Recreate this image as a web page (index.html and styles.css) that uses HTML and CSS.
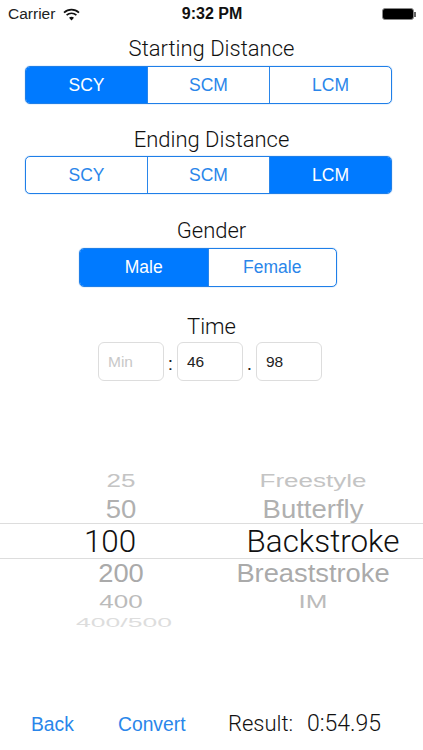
FILE: index.html
```html
<!DOCTYPE html>
<html lang="en">
<head>
    <meta charset="UTF-8">
    <meta name="viewport" content="width=device-width, initial-scale=1.0">
    <title>Swim Time Converter</title>
    <link rel="stylesheet" href="styles.css">
</head>
<body>
    <div class="status-bar">
        <div class="status-left">
            <span>Carrier</span>
            <svg class="wifi" width="17" height="13" viewBox="0 0 17 13">
                <path d="M1 4.6C5.3 0.6 11.7 0.6 16 4.6" fill="none" stroke="#111" stroke-width="1.7"/>
                <path d="M3.6 7.2C6.4 4.6 10.6 4.6 13.4 7.2" fill="none" stroke="#111" stroke-width="1.7"/>
                <path d="M6 9.7C7.4 8.4 9.6 8.4 11 9.7L8.5 12.4Z" fill="#111"/>
            </svg>
        </div>
        <div class="status-time">9:32 PM</div>
        <div class="battery"><div class="battery-body"></div><div class="battery-tip"></div></div>
    </div>

    <h2 class="title">Starting Distance</h2>
    <div class="segments wide tight">
        <div class="seg active">SCY</div>
        <div class="seg">SCM</div>
        <div class="seg">LCM</div>
    </div>

    <h2 class="title">Ending Distance</h2>
    <div class="segments wide">
        <div class="seg">SCY</div>
        <div class="seg">SCM</div>
        <div class="seg active">LCM</div>
    </div>

    <h2 class="title">Gender</h2>
    <div class="segments narrow">
        <div class="seg active">Male</div>
        <div class="seg">Female</div>
    </div>

    <h2 class="title">Time</h2>
    <div class="time-row">
        <div class="field placeholder">Min</div>
        <span class="sep">:</span>
        <div class="field">46</div>
        <span class="sep">.</span>
        <div class="field">98</div>
    </div>

    <div class="picker">
        <div class="row r-25"><span class="num">25</span><span class="name">Freestyle</span></div>
        <div class="row r-50"><span class="num">50</span><span class="name">Butterfly</span></div>
        <div class="row selected"><span class="num">100</span><span class="name">Backstroke</span></div>
        <div class="row r-200"><span class="num">200</span><span class="name">Breaststroke</span></div>
        <div class="row r-400"><span class="num">400</span><span class="name">IM</span></div>
        <div class="row r-last"><span class="num">400/500</span><span class="name"></span></div>
    </div>

    <div class="bottom-bar">
        <span class="link back">Back</span>
        <span class="link convert">Convert</span>
        <span class="result">Result:</span>
        <span class="result-value">0:54.95</span>
    </div>
</body>
</html>
```

FILE: styles.css
```css
body {
    font-family: "Liberation Sans", Arial, sans-serif;
    width: 423px;
    height: 750px;
    margin: 0;
    background: #fff;
    color: #222;
    overflow: hidden;
}

.status-bar {
    display: flex;
    align-items: center;
    justify-content: space-between;
    height: 28px;
    padding: 0 7px 0 8px;
    font-size: 15.5px;
    color: #222;
}
.status-left {
    display: flex;
    align-items: center;
    gap: 8px;
    width: 120px;
}
.status-time {
    font-weight: bold;
    font-size: 16px;
    color: #111;
}
.battery {
    display: flex;
    align-items: center;
    justify-content: flex-end;
    width: 120px;
}
.battery-body {
    width: 30px;
    height: 10px;
    background: #000;
    border: 1px solid #888;
    border-radius: 3px;
}
.battery-tip {
    width: 2px;
    height: 5px;
    background: #666;
}

.title {
    margin: 0;
    height: 38px;
    padding-top: 8px;
    box-sizing: border-box;
    text-align: center;
    font-family: Roboto, "Liberation Sans", sans-serif;
    font-size: 22px;
    font-weight: 300;
    line-height: 26px;
    color: #111;
}
.tight + .title {
    padding-top: 9px;
}

.segments {
    display: flex;
    height: 38px;
    box-sizing: border-box;
    border: 1px solid #1f7fe8;
    border-radius: 5px;
    box-shadow: 0 0 1px #2a86ea;
    overflow: hidden;
    margin-bottom: 16px;
}
.tight {
    margin-bottom: 14px;
}
.wide {
    width: 367px;
    margin-left: 25px;
}
.narrow {
    width: 258px;
    height: 39px;
    margin-left: 79px;
    margin-bottom: 19px;
}
.seg {
    flex: 1;
    display: flex;
    align-items: center;
    justify-content: center;
    font-size: 17.5px;
    color: #2a86ea;
    border-left: 1px solid #2a86ea;
}
.seg:first-child {
    border-left: none;
}
.seg.active {
    background: #007aff;
    color: #fff;
}

.time-row {
    display: flex;
    align-items: center;
    margin-left: 98px;
    margin-top: -2px;
}
.field {
    width: 66px;
    height: 39px;
    box-sizing: border-box;
    border: 1px solid #ddd;
    border-radius: 6px;
    padding-left: 9px;
    font-size: 15.5px;
    line-height: 37px;
    color: #222;
}
.placeholder {
    color: #c8c8c8;
}
.sep {
    width: 13px;
    text-align: center;
    font-size: 19px;
    padding-top: 5px;
}

.picker {
    margin-top: 83px;
}
.row {
    display: grid;
    grid-template-columns: 226px 174px;
    text-align: center;
    white-space: nowrap;
}
.num {
    padding-left: 16px;
}
.r-25 {
    height: 28px;
    line-height: 36px;
    font-size: 26px;
    color: #c4c4c4;
    transform: scaleY(0.7);
}
.r-50 {
    height: 31px;
    line-height: 35px;
    font-size: 27.5px;
    color: #b0b0b0;
    transform: scaleY(0.92);
}
.selected {
    height: 36px;
    box-sizing: border-box;
    font-family: Roboto, "Liberation Sans", sans-serif;
    font-weight: 300;
    line-height: 36px;
    font-size: 31.4px;
    color: #111;
    border-top: 1px solid #ddd;
    border-bottom: 1px solid #ddd;
}
.selected .num {
    padding-left: 0;
    padding-right: 6px;
}
.selected .name {
    padding-left: 20px;
}
.r-200 {
    height: 29px;
    line-height: 29px;
    font-size: 27.3px;
    color: #aaa;
    transform: scaleY(0.94);
}
.r-400 {
    height: 26px;
    line-height: 28px;
    font-size: 26px;
    color: #bbb;
    transform: scaleY(0.72);
}
.r-last {
    height: 16px;
    line-height: 18px;
    font-size: 26.5px;
    color: #ddd;
    transform: scaleY(0.5);
}
.r-last .num {
    padding-left: 22px;
}

.bottom-bar {
    display: flex;
    align-items: baseline;
    margin-top: 81px;
    padding-left: 31px;
    font-size: 19.3px;
    line-height: 26px;
}
.link {
    color: #2a86ea;
}
.back {
    width: 87px;
}
.convert {
    width: 110px;
}
.result {
    width: 79px;
    font-family: Roboto, "Liberation Sans", sans-serif;
    font-weight: 300;
    font-size: 22px;
    color: #111;
}
.result-value {
    font-family: Roboto, "Liberation Sans", sans-serif;
    font-weight: 300;
    font-size: 23px;
    color: #111;
}
```
